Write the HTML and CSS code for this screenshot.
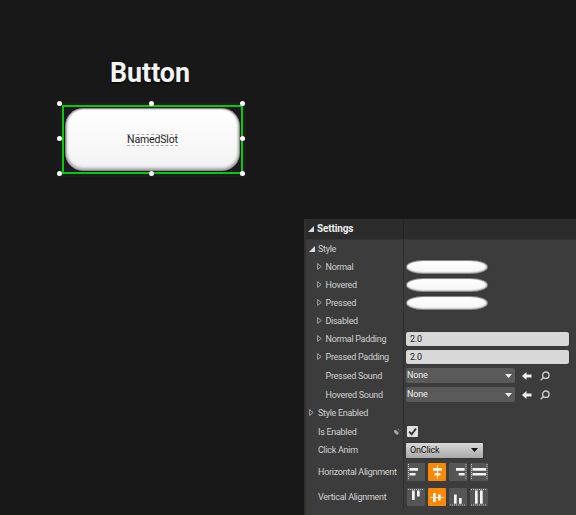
FILE: index.html
```html
<!DOCTYPE html>
<html lang="en">
<head>
<meta charset="utf-8">
<title>Button settings</title>
<link rel="stylesheet" href="styles.css">
</head>
<body>
<section class="preview">
  <h1>Button</h1>
  <div class="selection">
    <div class="button-face"><span class="slot">NamedSlot</span></div>
    <i class="handle top left"></i><i class="handle top center"></i><i class="handle top right"></i>
    <i class="handle middle left"></i><i class="handle middle right"></i>
    <i class="handle bottom left"></i><i class="handle bottom center"></i><i class="handle bottom right"></i>
  </div>
</section>
<section class="panel">
  <div class="row header"><div class="label"><svg class="open" viewBox="0 0 6 6"><path d="M6 0V6H0Z"/></svg><span>Settings</span></div><div class="value"></div></div>
  <div class="row"><div class="label group"><svg class="open" viewBox="0 0 6 6"><path d="M6 0V6H0Z"/></svg><span>Style</span></div><div class="value"></div></div>
  <div class="row"><div class="label child"><svg class="closed" viewBox="0 0 5 7"><path d="M.6.6 4.2 3.5.6 6.4Z"/></svg><span>Normal</span></div><div class="value"><div class="pill"></div></div></div>
  <div class="row"><div class="label child"><svg class="closed" viewBox="0 0 5 7"><path d="M.6.6 4.2 3.5.6 6.4Z"/></svg><span>Hovered</span></div><div class="value"><div class="pill"></div></div></div>
  <div class="row"><div class="label child"><svg class="closed" viewBox="0 0 5 7"><path d="M.6.6 4.2 3.5.6 6.4Z"/></svg><span>Pressed</span></div><div class="value"><div class="pill"></div></div></div>
  <div class="row"><div class="label child"><svg class="closed" viewBox="0 0 5 7"><path d="M.6.6 4.2 3.5.6 6.4Z"/></svg><span>Disabled</span></div><div class="value"></div></div>
  <div class="row"><div class="label child"><svg class="closed" viewBox="0 0 5 7"><path d="M.6.6 4.2 3.5.6 6.4Z"/></svg><span>Normal Padding</span></div><div class="value"><div class="field">2.0</div></div></div>
  <div class="row"><div class="label child"><svg class="closed" viewBox="0 0 5 7"><path d="M.6.6 4.2 3.5.6 6.4Z"/></svg><span>Pressed Padding</span></div><div class="value"><div class="field">2.0</div></div></div>
  <div class="row sound"><div class="label leaf deep"><span>Pressed Sound</span></div><div class="value">
    <div class="asset"><span>None</span><svg class="caret" viewBox="0 0 7 4"><path d="M0 0H7L3.5 4Z"/></svg></div>
    <svg class="arrow" viewBox="0 0 10 8"><path d="M0 4 4.5 0V2.5H9.5V5.5H4.5V8Z"/></svg>
    <svg class="lens" viewBox="0 0 10 10"><circle cx="5.8" cy="4.2" r="3.2"/><path d="M3.5 6.5.7 9.2"/></svg></div></div>
  <div class="row sound"><div class="label leaf deep"><span>Hovered Sound</span></div><div class="value">
    <div class="asset"><span>None</span><svg class="caret" viewBox="0 0 7 4"><path d="M0 0H7L3.5 4Z"/></svg></div>
    <svg class="arrow" viewBox="0 0 10 8"><path d="M0 4 4.5 0V2.5H9.5V5.5H4.5V8Z"/></svg>
    <svg class="lens" viewBox="0 0 10 10"><circle cx="5.8" cy="4.2" r="3.2"/><path d="M3.5 6.5.7 9.2"/></svg></div></div>
  <div class="row"><div class="label group"><svg class="closed" viewBox="0 0 5 7"><path d="M.6.6 4.2 3.5.6 6.4Z"/></svg><span>Style Enabled</span></div><div class="value"></div></div>
  <div class="row flag"><div class="label leaf"><span>Is Enabled</span><svg class="plug" viewBox="0 0 7 7"><path d="M0 3 1.5 2 4.5 5 3.5 6.5Q1 6 0 3M3.8 2.2 5 1M5 3.6 6.3 2.3"/></svg></div><div class="value"><div class="check"><svg viewBox="0 0 10 10"><path d="M2 5.2 4.2 7.5 8.2 2.3"/></svg></div></div></div>
  <div class="row"><div class="label leaf"><span>Click Anim</span></div><div class="value"><div class="combo"><span>OnClick</span><svg class="caret" viewBox="0 0 7 4"><path d="M0 0H7L3.5 4Z"/></svg></div></div></div>
  <div class="row align"><div class="label leaf"><span>Horizontal Alignment</span></div><div class="value icons">
    <svg viewBox="0 0 18 18"><path class="dash" d="M1.5 1V17"/><path d="M2.5 5H11V7.7H2.5ZM2.5 10H8.5V12.6H2.5Z"/></svg>
    <svg class="active" viewBox="0 0 18 18"><path class="axis" d="M9.5 2V16"/><path d="M5 5H14V7.7H5ZM6.6 10H12.4V12.6H6.6Z"/></svg>
    <svg viewBox="0 0 18 18"><path class="dash" d="M17 1V17"/><path d="M7 5H15.6V7.7H7ZM9.7 10H15.6V12.6H9.7Z"/></svg>
    <svg viewBox="0 0 18 18"><path class="dash" d="M1.5 1V17M17 1V17"/><path d="M2.5 5H16V7.7H2.5ZM2.5 10H16V12.6H2.5Z"/></svg></div></div>
  <div class="row valign"><div class="label leaf"><span>Vertical Alignment</span></div><div class="value icons">
    <svg viewBox="0 0 18 18"><path class="dash" d="M1 1.5H17"/><path d="M5 2.5H7.7V12H5ZM10 2.5H12.7V8.5H10Z"/></svg>
    <svg class="active" viewBox="0 0 18 18"><path class="axis" d="M2 9.5H16"/><path d="M5 5H7.7V14H5ZM10 6.5H12.7V12.5H10Z"/></svg>
    <svg viewBox="0 0 18 18"><path class="dash" d="M1 17H17"/><path d="M5 6.5H7.7V15.7H5ZM10 10H12.7V15.7H10Z"/></svg>
    <svg viewBox="0 0 18 18"><path class="dash" d="M1 1.5H17M1 17H17"/><path d="M5 2.5H7.7V15.7H5ZM10 2.5H12.7V15.7H10Z"/></svg></div></div>
</section>
</body>
</html>
```
FILE: styles.css
```css
* { box-sizing: border-box; }
body {
  margin: 0; width: 576px; height: 515px; overflow: hidden;
  background: #181818; color: #d2d2d2;
  font: 9px/12px Roboto, "Liberation Sans", sans-serif;
}
svg { display: block; flex: none; }
.preview { height: 219px; padding: 57px 0 0 62px; }
h1 {
  width: 176px; height: 48px; margin: 0; text-align: center;
  font-size: 26.8px; line-height: 32px; font-weight: 700; color: #f4f4f4;
  text-shadow: 0 1px 2px #000;
}
.selection {
  position: relative; width: 181px; height: 69px; padding: 1px;
  border: 2px solid #05cb05; background: #211623;
  outline: 3px solid #1d1b1e;
}
.button-face {
  height: 63px; display: flex; align-items: center; justify-content: center;
  border-radius: 18px; border: 1px solid #888;
  background: linear-gradient(#fff, #f3f2f3);
  box-shadow: inset 0 -2px 3px #aaa, inset -1px 0 2px #bbb, inset 1px 0 2px #bbb;
}
.slot { border: 1px dashed #aaa; border-width: 1px 0; font-size: 10.5px; line-height: 10px; letter-spacing: -.15px; color: #222; }
.handle { position: absolute; width: 5px; height: 5px; border-radius: 50%; background: #fff; }
.top { top: -6px; } .middle { top: 29px; } .bottom { bottom: -4px; }
.left { left: -7px; } .center { left: 85px; } .right { right: -4px; }

.panel { width: 272px; height: 296px; margin-left: 304px; background: #3c3c3c; border-left: 2px solid #303030; }
.row { display: flex; height: 18px; }
.label { width: 98px; display: flex; align-items: center; border-right: 1px solid #2e2e2e; white-space: nowrap; letter-spacing: -.29px; }
.value { flex: 1; display: flex; align-items: center; padding-left: 2px; }
.header { height: 21px; background: #2c2c2c; border-bottom: 1px solid #353535; }
.header .label { padding-left: 2px; gap: 3px; font-size: 10px; font-weight: 700; letter-spacing: -.15px; color: #eee; border-color: #222; }
.open { width: 6px; height: 6px; fill: #ddd; }
.closed { width: 5px; height: 7px; margin-bottom: 1px; fill: none; stroke: #bbb; stroke-width: .8; }
.group { padding-left: 3px; gap: 3px; }
.group .closed { margin-right: 1px; }
.child { padding-left: 11px; gap: 3.5px; }
.leaf { padding-left: 12px; }
.deep { padding-left: 19.5px; }
.pill {
  width: 82px; height: 14px; border: 1px solid #888; border-radius: 17px / 7px;
  background: linear-gradient(#fff, #f5f5f5); box-shadow: inset 0 -1px 1px #ccc, inset -1px 0 1px #bbb, 0 0 1px #222;
}
.field {
  width: 163px; height: 14px; border-radius: 2px; padding-left: 4px;
  background: #d8d8d8; color: #222; line-height: 14px; letter-spacing: -.2px; box-shadow: 0 0 1px #111;
}
.sound { height: 19px; }
.asset {
  width: 109px; height: 15px; padding: 0 3px 0 1px;
  display: flex; align-items: center; justify-content: space-between;
  background: #5a5a5a; border-radius: 2px; color: #eee; letter-spacing: -.2px;
}
.asset span { padding-bottom: 1px; }
.caret { width: 7px; height: 4px; fill: currentColor; }
.arrow { width: 10px; height: 8px; margin-left: 7px; fill: #eee; }
.lens { width: 10px; height: 10px; margin-left: 8px; fill: none; stroke: #ccc; stroke-width: 1.4; }
.flag { height: 19px; }
.plug { width: 7px; height: 7px; margin: 0 2px 0 auto; fill: #aaa; stroke: #aaa; stroke-width: .7; }
.check { width: 11px; height: 11px; border-radius: 1px; background: #e2e2e2; }
.flag .value, .icons { padding-left: 3px; }
.check svg { width: 11px; height: 11px; fill: none; stroke: #333; stroke-width: 1.7; }
.combo {
  width: 77px; height: 15px; padding: 0 5px 0 4px; display: flex; align-items: center; justify-content: space-between;
  border-radius: 1px; background: linear-gradient(#d8d8d8, #aaa); color: #111; letter-spacing: -.2px; box-shadow: 0 0 1px #111;
}
.align { height: 25px; } .valign { height: 31px; padding-bottom: 6px; }
.icons { gap: 3px; }
.icons svg { width: 18px; height: 18px; background: #555; fill: #f4f4f4; border-radius: 1px; }
.icons .active { background: #f98907; }
.dash { stroke: #ccc; stroke-width: 1; stroke-dasharray: 1 1; }
.axis { stroke: #ffe0b8; stroke-width: 1; }
```
